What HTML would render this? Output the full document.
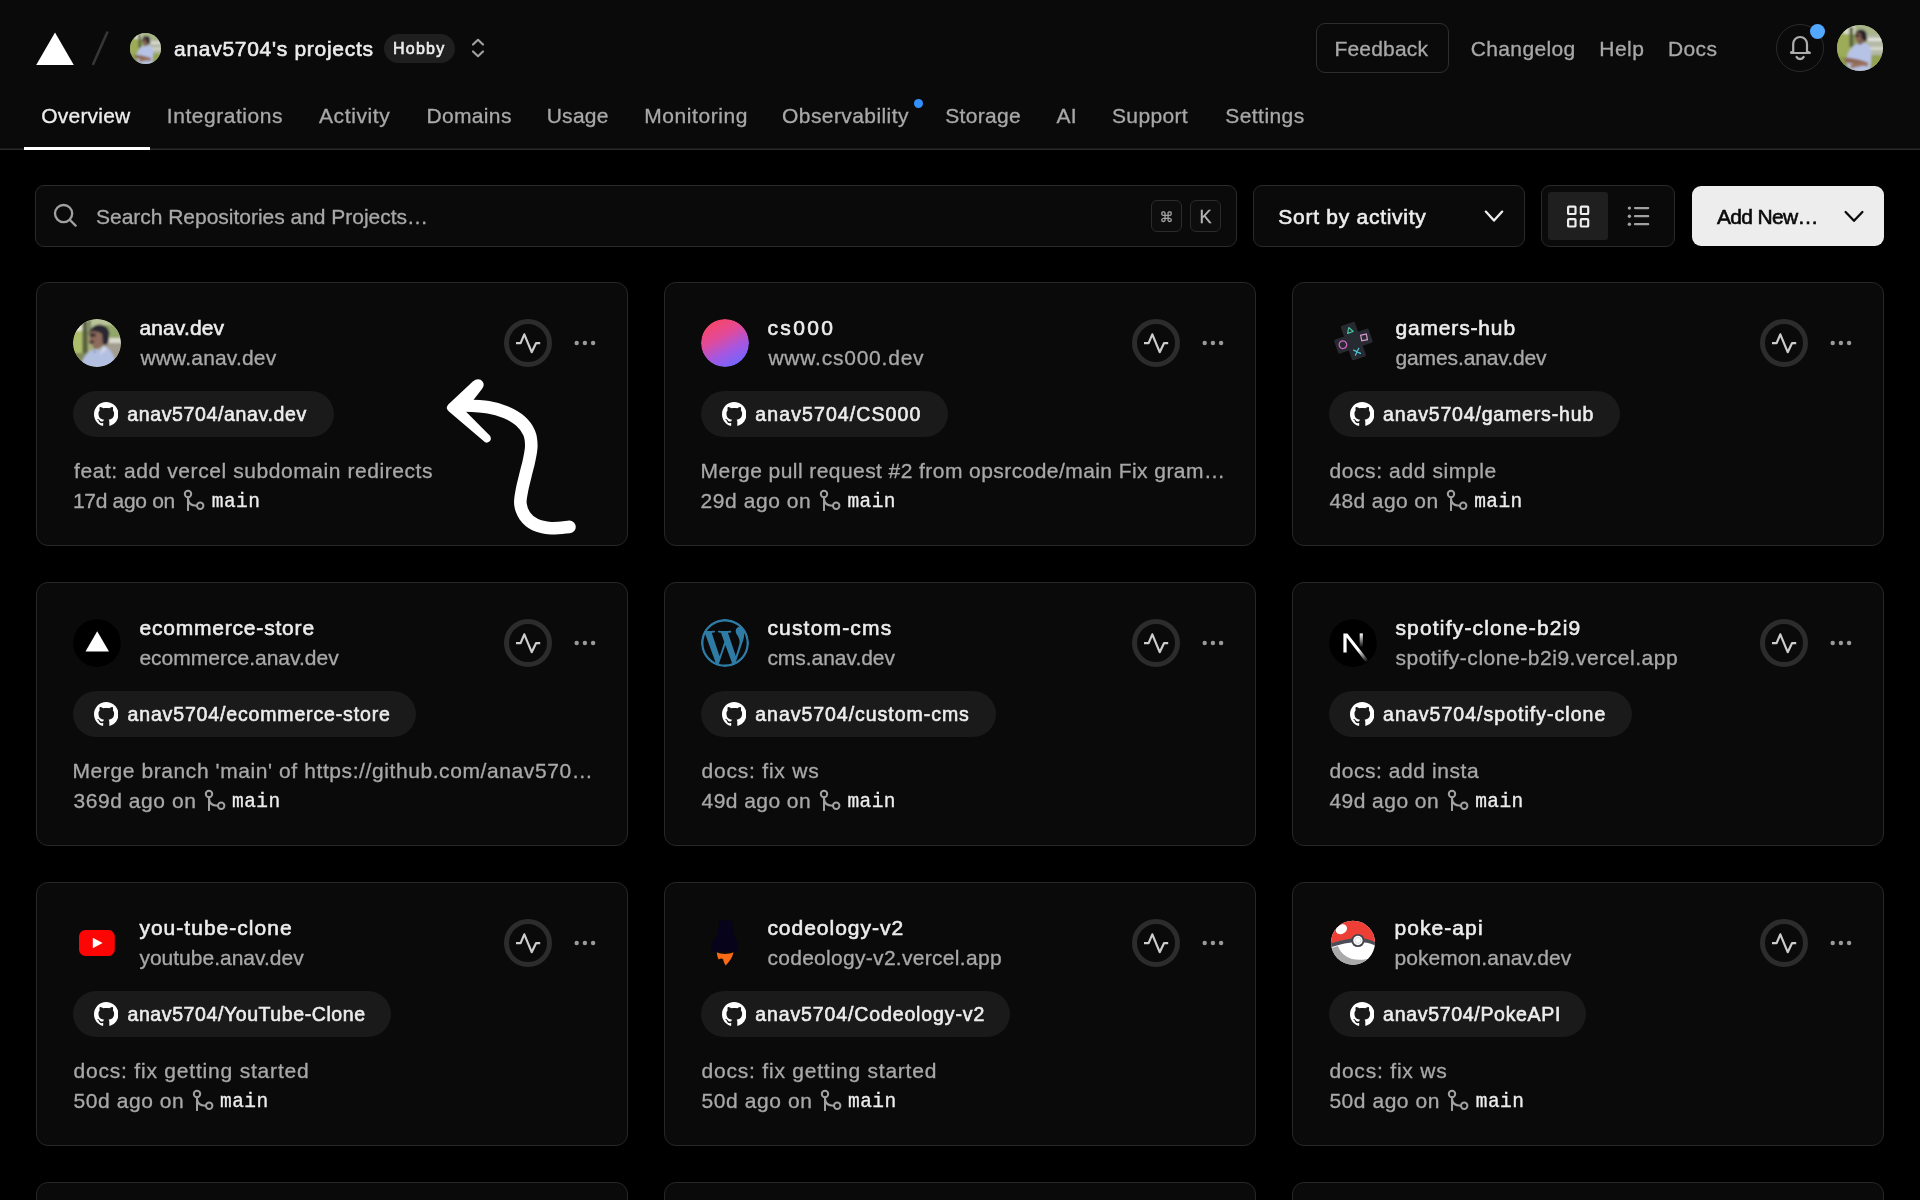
<!DOCTYPE html>
<html lang="en">
<head>
<meta charset="utf-8">
<title>Overview – Vercel</title>
<style>
*{box-sizing:border-box;margin:0;padding:0}
html,body{width:1920px;height:1200px;overflow:hidden;background:#000;color:#ededed;font-family:"Liberation Sans",sans-serif}
.abs{position:absolute}
#hdr{position:absolute;left:0;top:0;width:1920px;height:150px;background:#0a0a0a;border-bottom:1px solid #2a2a2a;box-shadow:inset 0 -1px 0 #181818}
.t{position:absolute;white-space:nowrap;line-height:30px;font-size:21px}
#ul{position:absolute;left:24px;top:147px;width:126px;height:3px;background:#fff}
.card{position:absolute;width:592px;height:264px;border:1px solid #272727;border-radius:12px;background:#0a0a0a}
.av{width:48px;height:48px;border-radius:50%;overflow:hidden}
.av svg{display:block}
.ring{width:48px;height:48px;border-radius:50%;border:5px solid #2c2c2c}
.pill{height:46px;border-radius:23px;background:#1a1a1a}
.box{border:1px solid #2a2a2a;border-radius:9px;background:#0a0a0a}
.kbd{width:31px;height:32px;padding-top:1px;border:1px solid #2a2a2a;border-radius:6px;background:#0d0d0d;color:#a1a1a1;font-size:17px;line-height:30px;text-align:center}
.avatar{border-radius:50%;background:radial-gradient(circle at 60% 75%,#b9c4e0 0 28%,transparent 30%),radial-gradient(circle at 58% 32%,#2a2623 0 14%,transparent 16%),linear-gradient(135deg,#9fb35a,#6f8a3c 50%,#a8a89a)}
#root{position:absolute;left:0;top:0;width:1920px;height:1200px;will-change:transform}
</style>
</head>
<body>
<div id="root">
<div id="hdr">
<svg class="abs" style="left:36px;top:32px" width="38" height="33" viewBox="0 0 38 33"><path d="M19 0.5 L37.8 33 L0.2 33 Z" fill="#fff"/></svg>
<svg class="abs" style="left:88px;top:28px" width="24" height="40" viewBox="0 0 24 40"><path d="M5.2 36 L19.2 4.5" stroke="#363636" stroke-width="2.6" stroke-linecap="round" fill="none"/></svg>
<div class="abs" style="left:130px;top:33px;width:31px;height:31px"><svg width="31" height="31" viewBox="0 0 46 46"><defs><filter id="bha" x="-20%" y="-20%" width="140%" height="140%"><feGaussianBlur stdDeviation="1.25"/></filter><clipPath id="cha"><circle cx="23" cy="23" r="23"/></clipPath></defs><g clip-path="url(#cha)"><rect width="46" height="46" fill="#8f9d5e"/><g filter="url(#bha)"><rect x="-2" y="8" width="16" height="26" fill="#9dac59"/><rect x="6" y="-2" width="12" height="11" fill="#d6dcc8"/><rect x="18" y="-2" width="30" height="12" fill="#a9b58a"/><rect x="29" y="10" width="19" height="22" fill="#b4b9a8"/><rect x="31" y="13" width="16" height="3" fill="#e3e5dc"/><rect x="33" y="22" width="14" height="3" fill="#d6d9cc"/><rect x="30" y="30" width="18" height="18" fill="#93a253"/><rect x="-2" y="32" width="14" height="16" fill="#8b9a4e"/><rect x="12.5" y="2" width="3.6" height="20" fill="#5a6140"/><ellipse cx="24" cy="9.6" rx="5.6" ry="5" fill="#27232b"/><ellipse cx="27.5" cy="13" rx="2.4" ry="3.6" fill="#27232b"/><ellipse cx="21.3" cy="12" rx="3" ry="4.2" fill="#8b6653"/><rect x="18.4" y="9.6" width="4.4" height="2" fill="#2d2526"/><rect x="21" y="14" width="5.5" height="6" fill="#80604f"/><path d="M9 36 C10 28 14 22 20 18.5 L23 20 L27 17.5 C32 19 34.5 23 34.5 29 L33 47 L13 47 Z" fill="#b7c3e6"/><path d="M7.5 33 C12 32 24 35 31 37.5 L30.5 41.5 C24 40 14 38.5 8.5 37.5 Z" fill="#8c6650"/><path d="M13 40 C18 38 26 36.5 31 37 L31 40.5 C26 40.5 19 42 14 43.5 Z" fill="#9a735c"/></g></g></svg></div>
<div class="abs" style="left:384px;top:34px;width:71px;height:29px;border-radius:15px;background:#1f1f1f"></div>
<svg class="abs" style="left:466px;top:36px" width="24" height="24" viewBox="0 0 24 24" fill="none" stroke="#a1a1a1" stroke-width="2.2" stroke-linecap="round" stroke-linejoin="round"><path d="M7 8.5 L12 3.8 L17 8.5"/><path d="M7 15.5 L12 20.2 L17 15.5"/></svg>
<div class="abs" id="fb" style="left:1316px;top:23px;width:133px;height:50px;border:1px solid #2e2e2e;border-radius:9px"></div>
<div class="abs" style="left:1776px;top:24px;width:48px;height:48px;border-radius:50%;border:1px solid #2a2a2a"></div>
<svg class="abs" style="left:1788px;top:34px" width="24" height="28" viewBox="0 0 24 28" fill="none" stroke="#adadad" stroke-width="2.2" stroke-linejoin="round"><path d="M5.2 19 V10 C5.2 6 8.2 3 12.1 3 C16 3 19 6 19 10 V19 M2.3 19 H21.9 L19 17.2 M5.2 17.2 L2.3 19"/><path d="M8.6 23 C9.8 25.6 14.4 25.6 15.6 23" stroke-width="2.4" stroke-linecap="round"/></svg>
<div class="abs" style="left:1809.5px;top:23.5px;width:15px;height:15px;border-radius:50%;background:#52a8ff"></div>
<div class="abs" style="left:1837.2px;top:25px;width:46px;height:46px"><svg width="46" height="46" viewBox="0 0 46 46"><defs><filter id="bhb" x="-20%" y="-20%" width="140%" height="140%"><feGaussianBlur stdDeviation="0.8"/></filter><clipPath id="chb"><circle cx="23" cy="23" r="23"/></clipPath></defs><g clip-path="url(#chb)"><rect width="46" height="46" fill="#8f9d5e"/><g filter="url(#bhb)"><rect x="-2" y="8" width="16" height="26" fill="#9dac59"/><rect x="6" y="-2" width="12" height="11" fill="#d6dcc8"/><rect x="18" y="-2" width="30" height="12" fill="#a9b58a"/><rect x="29" y="10" width="19" height="22" fill="#b4b9a8"/><rect x="31" y="13" width="16" height="3" fill="#e3e5dc"/><rect x="33" y="22" width="14" height="3" fill="#d6d9cc"/><rect x="30" y="30" width="18" height="18" fill="#93a253"/><rect x="-2" y="32" width="14" height="16" fill="#8b9a4e"/><rect x="12.5" y="2" width="3.6" height="20" fill="#5a6140"/><ellipse cx="24" cy="9.6" rx="5.6" ry="5" fill="#27232b"/><ellipse cx="27.5" cy="13" rx="2.4" ry="3.6" fill="#27232b"/><ellipse cx="21.3" cy="12" rx="3" ry="4.2" fill="#8b6653"/><rect x="18.4" y="9.6" width="4.4" height="2" fill="#2d2526"/><rect x="21" y="14" width="5.5" height="6" fill="#80604f"/><path d="M9 36 C10 28 14 22 20 18.5 L23 20 L27 17.5 C32 19 34.5 23 34.5 29 L33 47 L13 47 Z" fill="#b7c3e6"/><path d="M7.5 33 C12 32 24 35 31 37.5 L30.5 41.5 C24 40 14 38.5 8.5 37.5 Z" fill="#8c6650"/><path d="M13 40 C18 38 26 36.5 31 37 L31 40.5 C26 40.5 19 42 14 43.5 Z" fill="#9a735c"/></g></g></svg></div>
<div class="abs" style="left:914.3px;top:99px;width:9px;height:9px;border-radius:50%;background:#3291ff"></div>
<div id="ul"></div>
</div>
<div id="tools">
<div class="abs box" style="left:35px;top:185px;width:1202px;height:62px"></div>
<svg class="abs" style="left:52px;top:202px" width="26" height="26" viewBox="0 0 26 26" fill="none" stroke="#a1a1a1" stroke-width="2.3" stroke-linecap="round"><circle cx="11.6" cy="11.6" r="8.6"/><path d="M18 18 L23.6 23.6"/></svg>
<div class="abs kbd" style="left:1151px;top:200px;font-family:'DejaVu Sans',sans-serif;font-size:14px;line-height:31px;-webkit-text-stroke:.3px #a1a1a1">⌘</div>
<div class="abs kbd" style="left:1190px;top:200px;font-size:18px;line-height:31px;color:#b4b4b4;-webkit-text-stroke:.35px #b4b4b4">K</div>
<div class="abs box" style="left:1253px;top:185px;width:272px;height:62px"></div>
<svg class="abs" style="left:1482px;top:204px" width="24" height="24" viewBox="0 0 24 24" fill="none" stroke="#ededed" stroke-width="2.3" stroke-linecap="round" stroke-linejoin="round"><path d="M3.8 7.6 L12 16.6 L20.2 7.6"/></svg>
<div class="abs box" style="left:1541px;top:185px;width:134px;height:62px"></div>
<div class="abs" style="left:1548px;top:192px;width:60px;height:48px;background:#1f1f1f;border-radius:3px"></div>
<svg class="abs" style="left:1566px;top:204px" width="24" height="24" viewBox="0 0 24 24" fill="none" stroke="#ededed" stroke-width="2.2"><rect x="2.1" y="2.6" width="7.4" height="7.4" rx=".8"/><rect x="14.8" y="2.6" width="7.4" height="7.4" rx=".8"/><rect x="2.1" y="15.1" width="7.4" height="7.4" rx=".8"/><rect x="14.8" y="15.1" width="7.4" height="7.4" rx=".8"/></svg>
<svg class="abs" style="left:1626px;top:204px" width="24" height="24" viewBox="0 0 24 24" fill="none" stroke="#a1a1a1" stroke-width="2.2" stroke-linecap="round"><path d="M9 4.1 H22.2 M9 12.2 H22.2 M9 20.2 H22.2"/><g fill="#a1a1a1" stroke="none"><circle cx="3.4" cy="4.1" r="1.7"/><circle cx="3.4" cy="12.2" r="1.7"/><circle cx="3.4" cy="20.2" r="1.7"/></g></svg>
<div class="abs" style="left:1692px;top:186px;width:192px;height:60px;border-radius:9px;background:#ededed"></div>
<svg class="abs" style="left:1842px;top:204px" width="24" height="24" viewBox="0 0 24 24" fill="none" stroke="#0a0a0a" stroke-width="2.3" stroke-linecap="round" stroke-linejoin="round"><path d="M3.6 8 L12 16.8 L20.4 8"/></svg>
</div>

<div class="t" style="left:174.00px;top:34px;font-size:21px;letter-spacing:0.715px;color:#ededed;-webkit-text-stroke:0.6px #ededed;">anav5704's projects</div>
<div class="t" style="left:393.10px;top:34px;font-size:16px;letter-spacing:1.212px;color:#ededed;-webkit-text-stroke:0.6px #ededed;">Hobby</div>
<div class="t" style="left:1334.50px;top:34px;font-size:21px;letter-spacing:0.182px;color:#a8a8a8;-webkit-text-stroke:0.32px #a8a8a8;">Feedback</div>
<div class="t" style="left:1470.80px;top:34px;font-size:21px;letter-spacing:0.349px;color:#a8a8a8;-webkit-text-stroke:0.32px #a8a8a8;">Changelog</div>
<div class="t" style="left:1599.30px;top:34px;font-size:21px;letter-spacing:0.463px;color:#a8a8a8;-webkit-text-stroke:0.32px #a8a8a8;">Help</div>
<div class="t" style="left:1668.00px;top:34px;font-size:21px;letter-spacing:0.385px;color:#a8a8a8;-webkit-text-stroke:0.32px #a8a8a8;">Docs</div>
<div class="t" style="left:41.30px;top:101px;font-size:21px;letter-spacing:0.193px;color:#ededed;-webkit-text-stroke:0.32px #ededed;">Overview</div>
<div class="t" style="left:166.80px;top:101px;font-size:21px;letter-spacing:0.542px;color:#a8a8a8;-webkit-text-stroke:0.32px #a8a8a8;">Integrations</div>
<div class="t" style="left:319.00px;top:101px;font-size:21px;letter-spacing:0.599px;color:#a8a8a8;-webkit-text-stroke:0.32px #a8a8a8;">Activity</div>
<div class="t" style="left:426.40px;top:101px;font-size:21px;letter-spacing:0.356px;color:#a8a8a8;-webkit-text-stroke:0.32px #a8a8a8;">Domains</div>
<div class="t" style="left:546.70px;top:101px;font-size:21px;letter-spacing:0.269px;color:#a8a8a8;-webkit-text-stroke:0.32px #a8a8a8;">Usage</div>
<div class="t" style="left:644.30px;top:101px;font-size:21px;letter-spacing:0.559px;color:#a8a8a8;-webkit-text-stroke:0.32px #a8a8a8;">Monitoring</div>
<div class="t" style="left:782.10px;top:101px;font-size:21px;letter-spacing:0.410px;color:#a8a8a8;-webkit-text-stroke:0.32px #a8a8a8;">Observability</div>
<div class="t" style="left:945.30px;top:101px;font-size:21px;letter-spacing:0.305px;color:#a8a8a8;-webkit-text-stroke:0.32px #a8a8a8;">Storage</div>
<div class="t" style="left:1056.50px;top:101px;font-size:21px;letter-spacing:0.293px;color:#a8a8a8;-webkit-text-stroke:0.32px #a8a8a8;">AI</div>
<div class="t" style="left:1112.00px;top:101px;font-size:21px;letter-spacing:0.347px;color:#a8a8a8;-webkit-text-stroke:0.32px #a8a8a8;">Support</div>
<div class="t" style="left:1225.30px;top:101px;font-size:21px;letter-spacing:0.432px;color:#a8a8a8;-webkit-text-stroke:0.32px #a8a8a8;">Settings</div>
<div class="t" style="left:96.00px;top:201.6px;font-size:21px;letter-spacing:-0.021px;color:#a8a8a8;-webkit-text-stroke:0.32px #a8a8a8;">Search Repositories and Projects…</div>
<div class="t" style="left:1278.30px;top:201.6px;font-size:21px;letter-spacing:0.731px;color:#ededed;-webkit-text-stroke:0.6px #ededed;">Sort by activity</div>
<div class="t" style="left:1716.90px;top:201.6px;font-size:21px;letter-spacing:-0.673px;color:#0a0a0a;-webkit-text-stroke:0.6px #0a0a0a;">Add New…</div>
<div class="card" style="left:36px;top:282px"></div>
<div class="abs av" style="left:73px;top:319px"><svg width="48" height="48" viewBox="0 0 48 48"><defs><filter id="bl1" x="-20%" y="-20%" width="140%" height="140%"><feGaussianBlur stdDeviation="0.85"/></filter><clipPath id="cp1"><circle cx="24" cy="24" r="24"/></clipPath></defs><g clip-path="url(#cp1)"><rect width="48" height="48" fill="#a3ad7a"/><g filter="url(#bl1)"><rect x="-2" y="10" width="14" height="30" fill="#adbd6a"/><rect x="0" y="-2" width="20" height="14" fill="#dfe3cf"/><rect x="18" y="-2" width="32" height="16" fill="#b9c49a"/><rect x="30" y="6" width="20" height="14" fill="#93a66a"/><rect x="28" y="19" width="22" height="26" fill="#a39d8f"/><rect x="33" y="19" width="16" height="5" fill="#d9d9cc"/><rect x="9.5" y="2" width="5" height="34" fill="#56603c"/><rect x="15" y="0" width="3" height="16" fill="#7d8760"/><rect x="0" y="34" width="14" height="16" fill="#7f8a58"/><ellipse cx="26.5" cy="14.5" rx="10" ry="9" fill="#2a2630"/><ellipse cx="32" cy="20" rx="4" ry="6" fill="#2a2630"/><path d="M16.5 14 C18 11 26 12 29 15 L30 27 L22 31 L19 25 L16 24 Z" fill="#8c6b5c"/><path d="M17 14.5 L23 14.5 L22 18 L17.5 18 Z" fill="#3a2c2c"/><path d="M16 23 C18 25.5 20.5 25 21 22.5 L20 21 Z" fill="#3b2e2b"/><path d="M7 50 C9 38 15 32 22 30 L26 31 L31 27 C38 30 41 36 42.5 44 L43 50 Z" fill="#b4c0e2"/><path d="M21 30 L22.5 34 L21.3 34 Z" fill="#4a5878"/><path d="M30 27 L27 36 L34 30 Z" fill="#d5d6ea"/></g></g></svg></div>
<div class="t" style="left:139.40px;top:313px;font-size:21px;letter-spacing:0.147px;color:#ededed;-webkit-text-stroke:0.6px #ededed;">anav.dev</div>
<div class="t" style="left:140.40px;top:343px;font-size:21px;letter-spacing:0.178px;color:#a8a8a8;-webkit-text-stroke:0.32px #a8a8a8;">www.anav.dev</div>
<div class="abs ring" style="left:504px;top:319px"></div>
<svg class="abs" style="left:516px;top:331px" width="25" height="24" viewBox="0 0 25 24" fill="none" stroke="#cdcdcd" stroke-width="2.2" stroke-linejoin="round"><path d="M0 12.2 H4.6 L8.3 3.3 L15.7 21.2 L20 12.2 H24.2"/></svg>
<svg class="abs" style="left:573px;top:340px" width="24" height="6" viewBox="0 0 24 6" fill="#9a9a9a"><circle cx="3.7" cy="3" r="2.2"/><circle cx="11.9" cy="3" r="2.2"/><circle cx="20.1" cy="3" r="2.2"/></svg>
<div class="abs pill" style="left:73px;top:391px;width:261.0px"></div>
<svg class="abs" style="left:93.5px;top:401.8px" width="24.5" height="24.5" viewBox="0 0 16 16" fill="#fff"><path d="M8 0C3.58 0 0 3.58 0 8c0 3.54 2.29 6.53 5.47 7.59.4.07.55-.17.55-.38 0-.19-.01-.82-.01-1.49-2.01.37-2.53-.49-2.69-.94-.09-.23-.48-.94-.82-1.13-.28-.15-.68-.52-.01-.53.63-.01 1.08.58 1.23.82.72 1.21 1.87.87 2.33.66.07-.52.28-.87.51-1.07-1.78-.2-3.64-.89-3.64-3.95 0-.87.31-1.59.82-2.15-.08-.2-.36-1.02.08-2.12 0 0 .67-.21 2.2.82.64-.18 1.32-.27 2-.27.68 0 1.36.09 2 .27 1.53-1.04 2.2-.82 2.2-.82.44 1.1.16 1.92.08 2.12.51.56.82 1.27.82 2.15 0 3.07-1.87 3.75-3.65 3.95.29.25.54.73.54 1.48 0 1.07-.01 1.93-.01 2.2 0 .21.15.46.55.38A8.013 8.013 0 0016 8c0-4.42-3.58-8-8-8z"/></svg>
<div class="t" style="left:127.20px;top:398.5px;font-size:19.5px;letter-spacing:0.642px;color:#ededed;-webkit-text-stroke:0.6px #ededed;">anav5704/anav.dev</div>
<div class="t" style="left:74.00px;top:455.5px;font-size:21px;letter-spacing:0.571px;color:#a8a8a8;-webkit-text-stroke:0.32px #a8a8a8;">feat: add vercel subdomain redirects</div>
<div class="t" style="left:73.00px;top:486px;font-size:21px;letter-spacing:-0.325px;color:#a8a8a8;-webkit-text-stroke:0.32px #a8a8a8;">17d ago on</div>
<svg class="abs" style="left:183.1px;top:489.3px" width="22" height="22" viewBox="0 0 22 22" fill="none" stroke="#a1a1a1" stroke-width="2" stroke-linecap="round"><circle cx="5" cy="5" r="3.2"/><circle cx="17.2" cy="16.8" r="3.2"/><path d="M5 8.3 V21.2 M5 9 C5 14 8 16.8 13.9 16.8"/></svg>
<div class="t" style="left:211.80px;top:486.5px;font-size:19.5px;letter-spacing:0.431px;color:#ededed;font-family:'Liberation Mono',monospace;-webkit-text-stroke:0.32px #ededed;">main</div>
<div class="card" style="left:664px;top:282px"></div>
<div class="abs av" style="left:701px;top:319px"><div style="width:48px;height:48px;border-radius:50%;background:linear-gradient(152deg,#f6466a 12%,#e24a98 38%,#a856de 62%,#7765fb 86%)"></div></div>
<div class="t" style="left:767.40px;top:313px;font-size:21px;letter-spacing:2.385px;color:#ededed;-webkit-text-stroke:0.6px #ededed;">cs000</div>
<div class="t" style="left:768.40px;top:343px;font-size:21px;letter-spacing:0.775px;color:#a8a8a8;-webkit-text-stroke:0.32px #a8a8a8;">www.cs000.dev</div>
<div class="abs ring" style="left:1132px;top:319px"></div>
<svg class="abs" style="left:1144px;top:331px" width="25" height="24" viewBox="0 0 25 24" fill="none" stroke="#cdcdcd" stroke-width="2.2" stroke-linejoin="round"><path d="M0 12.2 H4.6 L8.3 3.3 L15.7 21.2 L20 12.2 H24.2"/></svg>
<svg class="abs" style="left:1201px;top:340px" width="24" height="6" viewBox="0 0 24 6" fill="#9a9a9a"><circle cx="3.7" cy="3" r="2.2"/><circle cx="11.9" cy="3" r="2.2"/><circle cx="20.1" cy="3" r="2.2"/></svg>
<div class="abs pill" style="left:701px;top:391px;width:247.0px"></div>
<svg class="abs" style="left:721.5px;top:401.8px" width="24.5" height="24.5" viewBox="0 0 16 16" fill="#fff"><path d="M8 0C3.58 0 0 3.58 0 8c0 3.54 2.29 6.53 5.47 7.59.4.07.55-.17.55-.38 0-.19-.01-.82-.01-1.49-2.01.37-2.53-.49-2.69-.94-.09-.23-.48-.94-.82-1.13-.28-.15-.68-.52-.01-.53.63-.01 1.08.58 1.23.82.72 1.21 1.87.87 2.33.66.07-.52.28-.87.51-1.07-1.78-.2-3.64-.89-3.64-3.95 0-.87.31-1.59.82-2.15-.08-.2-.36-1.02.08-2.12 0 0 .67-.21 2.2.82.64-.18 1.32-.27 2-.27.68 0 1.36.09 2 .27 1.53-1.04 2.2-.82 2.2-.82.44 1.1.16 1.92.08 2.12.51.56.82 1.27.82 2.15 0 3.07-1.87 3.75-3.65 3.95.29.25.54.73.54 1.48 0 1.07-.01 1.93-.01 2.2 0 .21.15.46.55.38A8.013 8.013 0 0016 8c0-4.42-3.58-8-8-8z"/></svg>
<div class="t" style="left:755.30px;top:398.5px;font-size:19.5px;letter-spacing:1.103px;color:#ededed;-webkit-text-stroke:0.6px #ededed;">anav5704/CS000</div>
<div class="t" style="left:700.60px;top:455.5px;font-size:21px;letter-spacing:0.434px;color:#a8a8a8;-webkit-text-stroke:0.32px #a8a8a8;">Merge pull request #2 from opsrcode/main Fix gram…</div>
<div class="t" style="left:700.60px;top:486px;font-size:21px;letter-spacing:0.553px;color:#a8a8a8;-webkit-text-stroke:0.32px #a8a8a8;">29d ago on</div>
<svg class="abs" style="left:818.6px;top:489.3px" width="22" height="22" viewBox="0 0 22 22" fill="none" stroke="#a1a1a1" stroke-width="2" stroke-linecap="round"><circle cx="5" cy="5" r="3.2"/><circle cx="17.2" cy="16.8" r="3.2"/><path d="M5 8.3 V21.2 M5 9 C5 14 8 16.8 13.9 16.8"/></svg>
<div class="t" style="left:847.40px;top:486.5px;font-size:19.5px;letter-spacing:0.431px;color:#ededed;font-family:'Liberation Mono',monospace;-webkit-text-stroke:0.32px #ededed;">main</div>
<div class="card" style="left:1292px;top:282px"></div>
<div class="abs av" style="left:1329px;top:319px"><svg width="48" height="48" viewBox="0 0 48 48"><g transform="translate(24.4 22.1) rotate(-19) scale(.9)"><path d="M-6.5 -18.5 h13 v12 h12 v13 h-12 v12 h-13 v-12 h-12 v-13 h12z" fill="#272a31" stroke="#272a31" stroke-width="3.5" stroke-linejoin="round"/><path d="M0 -16 L3.3 -10.2 L-3.3 -10.2 Z" fill="none" stroke="#48c49c" stroke-width="1.3" stroke-linejoin="round"/><circle cx="-12.3" cy="0" r="4.2" fill="none" stroke="#d267c3" stroke-width="1.4"/><rect x="9.3" y="-3.2" width="6.4" height="6.4" fill="none" stroke="#d498cb" stroke-width="1.4" transform="rotate(8 12.5 0)"/><path d="M-3 9.5 L3 15.5 M3 9.5 L-3 15.5" stroke="#4cc3d3" stroke-width="1.4" stroke-linecap="round"/></g></svg></div>
<div class="t" style="left:1395.40px;top:313px;font-size:21px;letter-spacing:0.847px;color:#ededed;-webkit-text-stroke:0.6px #ededed;">gamers-hub</div>
<div class="t" style="left:1395.40px;top:343px;font-size:21px;letter-spacing:-0.103px;color:#a8a8a8;-webkit-text-stroke:0.32px #a8a8a8;">games.anav.dev</div>
<div class="abs ring" style="left:1760px;top:319px"></div>
<svg class="abs" style="left:1772px;top:331px" width="25" height="24" viewBox="0 0 25 24" fill="none" stroke="#cdcdcd" stroke-width="2.2" stroke-linejoin="round"><path d="M0 12.2 H4.6 L8.3 3.3 L15.7 21.2 L20 12.2 H24.2"/></svg>
<svg class="abs" style="left:1829px;top:340px" width="24" height="6" viewBox="0 0 24 6" fill="#9a9a9a"><circle cx="3.7" cy="3" r="2.2"/><circle cx="11.9" cy="3" r="2.2"/><circle cx="20.1" cy="3" r="2.2"/></svg>
<div class="abs pill" style="left:1329px;top:391px;width:291.4px"></div>
<svg class="abs" style="left:1349.5px;top:401.8px" width="24.5" height="24.5" viewBox="0 0 16 16" fill="#fff"><path d="M8 0C3.58 0 0 3.58 0 8c0 3.54 2.29 6.53 5.47 7.59.4.07.55-.17.55-.38 0-.19-.01-.82-.01-1.49-2.01.37-2.53-.49-2.69-.94-.09-.23-.48-.94-.82-1.13-.28-.15-.68-.52-.01-.53.63-.01 1.08.58 1.23.82.72 1.21 1.87.87 2.33.66.07-.52.28-.87.51-1.07-1.78-.2-3.64-.89-3.64-3.95 0-.87.31-1.59.82-2.15-.08-.2-.36-1.02.08-2.12 0 0 .67-.21 2.2.82.64-.18 1.32-.27 2-.27.68 0 1.36.09 2 .27 1.53-1.04 2.2-.82 2.2-.82.44 1.1.16 1.92.08 2.12.51.56.82 1.27.82 2.15 0 3.07-1.87 3.75-3.65 3.95.29.25.54.73.54 1.48 0 1.07-.01 1.93-.01 2.2 0 .21.15.46.55.38A8.013 8.013 0 0016 8c0-4.42-3.58-8-8-8z"/></svg>
<div class="t" style="left:1383.10px;top:398.5px;font-size:19.5px;letter-spacing:0.834px;color:#ededed;-webkit-text-stroke:0.6px #ededed;">anav5704/gamers-hub</div>
<div class="t" style="left:1329.40px;top:455.5px;font-size:21px;letter-spacing:0.613px;color:#a8a8a8;-webkit-text-stroke:0.32px #a8a8a8;">docs: add simple</div>
<div class="t" style="left:1329.40px;top:486px;font-size:21px;letter-spacing:0.397px;color:#a8a8a8;-webkit-text-stroke:0.32px #a8a8a8;">48d ago on</div>
<svg class="abs" style="left:1446.0px;top:489.3px" width="22" height="22" viewBox="0 0 22 22" fill="none" stroke="#a1a1a1" stroke-width="2" stroke-linecap="round"><circle cx="5" cy="5" r="3.2"/><circle cx="17.2" cy="16.8" r="3.2"/><path d="M5 8.3 V21.2 M5 9 C5 14 8 16.8 13.9 16.8"/></svg>
<div class="t" style="left:1474.20px;top:486.5px;font-size:19.5px;letter-spacing:0.431px;color:#ededed;font-family:'Liberation Mono',monospace;-webkit-text-stroke:0.32px #ededed;">main</div>
<div class="card" style="left:36px;top:582px"></div>
<div class="abs av" style="left:73px;top:619px"><svg width="48" height="48" viewBox="0 0 48 48"><circle cx="24" cy="24" r="24" fill="#000"/><path d="M24.2 12.2 L36 32.5 L12.5 32.5 Z" fill="#fff"/></svg></div>
<div class="t" style="left:139.40px;top:613px;font-size:21px;letter-spacing:0.807px;color:#ededed;-webkit-text-stroke:0.6px #ededed;">ecommerce-store</div>
<div class="t" style="left:139.40px;top:643px;font-size:21px;letter-spacing:0.006px;color:#a8a8a8;-webkit-text-stroke:0.32px #a8a8a8;">ecommerce.anav.dev</div>
<div class="abs ring" style="left:504px;top:619px"></div>
<svg class="abs" style="left:516px;top:631px" width="25" height="24" viewBox="0 0 25 24" fill="none" stroke="#cdcdcd" stroke-width="2.2" stroke-linejoin="round"><path d="M0 12.2 H4.6 L8.3 3.3 L15.7 21.2 L20 12.2 H24.2"/></svg>
<svg class="abs" style="left:573px;top:640px" width="24" height="6" viewBox="0 0 24 6" fill="#9a9a9a"><circle cx="3.7" cy="3" r="2.2"/><circle cx="11.9" cy="3" r="2.2"/><circle cx="20.1" cy="3" r="2.2"/></svg>
<div class="abs pill" style="left:73px;top:691px;width:343.0px"></div>
<svg class="abs" style="left:93.5px;top:701.8px" width="24.5" height="24.5" viewBox="0 0 16 16" fill="#fff"><path d="M8 0C3.58 0 0 3.58 0 8c0 3.54 2.29 6.53 5.47 7.59.4.07.55-.17.55-.38 0-.19-.01-.82-.01-1.49-2.01.37-2.53-.49-2.69-.94-.09-.23-.48-.94-.82-1.13-.28-.15-.68-.52-.01-.53.63-.01 1.08.58 1.23.82.72 1.21 1.87.87 2.33.66.07-.52.28-.87.51-1.07-1.78-.2-3.64-.89-3.64-3.95 0-.87.31-1.59.82-2.15-.08-.2-.36-1.02.08-2.12 0 0 .67-.21 2.2.82.64-.18 1.32-.27 2-.27.68 0 1.36.09 2 .27 1.53-1.04 2.2-.82 2.2-.82.44 1.1.16 1.92.08 2.12.51.56.82 1.27.82 2.15 0 3.07-1.87 3.75-3.65 3.95.29.25.54.73.54 1.48 0 1.07-.01 1.93-.01 2.2 0 .21.15.46.55.38A8.013 8.013 0 0016 8c0-4.42-3.58-8-8-8z"/></svg>
<div class="t" style="left:127.50px;top:698.5px;font-size:19.5px;letter-spacing:0.850px;color:#ededed;-webkit-text-stroke:0.6px #ededed;">anav5704/ecommerce-store</div>
<div class="t" style="left:72.50px;top:755.5px;font-size:21px;letter-spacing:0.590px;color:#a8a8a8;-webkit-text-stroke:0.32px #a8a8a8;">Merge branch 'main' of https://github.com/anav570…</div>
<div class="t" style="left:73.50px;top:786px;font-size:21px;letter-spacing:0.560px;color:#a8a8a8;-webkit-text-stroke:0.32px #a8a8a8;">369d ago on</div>
<svg class="abs" style="left:203.8px;top:789.3px" width="22" height="22" viewBox="0 0 22 22" fill="none" stroke="#a1a1a1" stroke-width="2" stroke-linecap="round"><circle cx="5" cy="5" r="3.2"/><circle cx="17.2" cy="16.8" r="3.2"/><path d="M5 8.3 V21.2 M5 9 C5 14 8 16.8 13.9 16.8"/></svg>
<div class="t" style="left:232.00px;top:786.5px;font-size:19.5px;letter-spacing:0.431px;color:#ededed;font-family:'Liberation Mono',monospace;-webkit-text-stroke:0.32px #ededed;">main</div>
<div class="card" style="left:664px;top:582px"></div>
<div class="abs av" style="left:701px;top:619px"><svg width="48" height="48" viewBox="0 0 24 24"><path fill="#2e7ca6" d="M21.469 6.825c.84 1.537 1.318 3.3 1.318 5.175 0 3.979-2.156 7.456-5.363 9.325l3.295-9.527c.615-1.54.82-2.771.82-3.864 0-.405-.026-.78-.07-1.11m-7.981.105c.647-.03 1.232-.105 1.232-.105.582-.075.514-.93-.067-.899 0 0-1.755.135-2.88.135-1.064 0-2.85-.15-2.85-.15-.585-.03-.661.855-.075.885 0 0 .54.061 1.125.09l1.68 4.605-2.37 7.08L5.354 6.9c.649-.03 1.234-.1 1.234-.1.585-.075.516-.93-.065-.896 0 0-1.746.138-2.874.138-.2 0-.438-.008-.69-.015C4.911 3.15 8.235 1.215 12 1.215c2.809 0 5.365 1.072 7.286 2.833-.046-.003-.091-.009-.141-.009-1.06 0-1.812.923-1.812 1.914 0 .89.513 1.643 1.060 2.531.411.72.89 1.643.89 2.977 0 .915-.354 1.994-.821 3.479l-1.075 3.585-3.9-11.61.001.014zM12 22.784c-1.059 0-2.081-.153-3.048-.437l3.237-9.406 3.315 9.087c.024.053.05.101.078.149-1.12.393-2.325.609-3.582.609M1.211 12c0-1.564.336-3.05.935-4.39L7.29 21.709C3.694 19.96 1.212 16.271 1.211 12M12 0C5.385 0 0 5.385 0 12s5.385 12 12 12 12-5.385 12-12S18.615 0 12 0"/></svg></div>
<div class="t" style="left:767.40px;top:613px;font-size:21px;letter-spacing:1.181px;color:#ededed;-webkit-text-stroke:0.6px #ededed;">custom-cms</div>
<div class="t" style="left:767.40px;top:643px;font-size:21px;letter-spacing:-0.036px;color:#a8a8a8;-webkit-text-stroke:0.32px #a8a8a8;">cms.anav.dev</div>
<div class="abs ring" style="left:1132px;top:619px"></div>
<svg class="abs" style="left:1144px;top:631px" width="25" height="24" viewBox="0 0 25 24" fill="none" stroke="#cdcdcd" stroke-width="2.2" stroke-linejoin="round"><path d="M0 12.2 H4.6 L8.3 3.3 L15.7 21.2 L20 12.2 H24.2"/></svg>
<svg class="abs" style="left:1201px;top:640px" width="24" height="6" viewBox="0 0 24 6" fill="#9a9a9a"><circle cx="3.7" cy="3" r="2.2"/><circle cx="11.9" cy="3" r="2.2"/><circle cx="20.1" cy="3" r="2.2"/></svg>
<div class="abs pill" style="left:701px;top:691px;width:295.1px"></div>
<svg class="abs" style="left:721.5px;top:701.8px" width="24.5" height="24.5" viewBox="0 0 16 16" fill="#fff"><path d="M8 0C3.58 0 0 3.58 0 8c0 3.54 2.29 6.53 5.47 7.59.4.07.55-.17.55-.38 0-.19-.01-.82-.01-1.49-2.01.37-2.53-.49-2.69-.94-.09-.23-.48-.94-.82-1.13-.28-.15-.68-.52-.01-.53.63-.01 1.08.58 1.23.82.72 1.21 1.87.87 2.33.66.07-.52.28-.87.51-1.07-1.78-.2-3.64-.89-3.64-3.95 0-.87.31-1.59.82-2.15-.08-.2-.36-1.02.08-2.12 0 0 .67-.21 2.2.82.64-.18 1.32-.27 2-.27.68 0 1.36.09 2 .27 1.53-1.04 2.2-.82 2.2-.82.44 1.1.16 1.92.08 2.12.51.56.82 1.27.82 2.15 0 3.07-1.87 3.75-3.65 3.95.29.25.54.73.54 1.48 0 1.07-.01 1.93-.01 2.2 0 .21.15.46.55.38A8.013 8.013 0 0016 8c0-4.42-3.58-8-8-8z"/></svg>
<div class="t" style="left:755.30px;top:698.5px;font-size:19.5px;letter-spacing:0.965px;color:#ededed;-webkit-text-stroke:0.6px #ededed;">anav5704/custom-cms</div>
<div class="t" style="left:701.60px;top:755.5px;font-size:21px;letter-spacing:0.779px;color:#a8a8a8;-webkit-text-stroke:0.32px #a8a8a8;">docs: fix ws</div>
<div class="t" style="left:701.60px;top:786px;font-size:21px;letter-spacing:0.442px;color:#a8a8a8;-webkit-text-stroke:0.32px #a8a8a8;">49d ago on</div>
<svg class="abs" style="left:818.6px;top:789.3px" width="22" height="22" viewBox="0 0 22 22" fill="none" stroke="#a1a1a1" stroke-width="2" stroke-linecap="round"><circle cx="5" cy="5" r="3.2"/><circle cx="17.2" cy="16.8" r="3.2"/><path d="M5 8.3 V21.2 M5 9 C5 14 8 16.8 13.9 16.8"/></svg>
<div class="t" style="left:847.40px;top:786.5px;font-size:19.5px;letter-spacing:0.431px;color:#ededed;font-family:'Liberation Mono',monospace;-webkit-text-stroke:0.32px #ededed;">main</div>
<div class="card" style="left:1292px;top:582px"></div>
<div class="abs av" style="left:1329px;top:619px"><svg width="48" height="48" viewBox="0 0 180 180"><defs><linearGradient id="nxa" x1="109" y1="116.5" x2="144.5" y2="160.5" gradientUnits="userSpaceOnUse"><stop stop-color="#fff"/><stop offset="1" stop-color="#fff" stop-opacity="0"/></linearGradient><linearGradient id="nxb" x1="121" y1="54" x2="120.8" y2="106.9" gradientUnits="userSpaceOnUse"><stop stop-color="#fff"/><stop offset="1" stop-color="#fff" stop-opacity="0"/></linearGradient></defs><circle cx="90" cy="90" r="90" fill="#000"/><path d="M149.508 157.52L69.142 54H54V125.97H66.1136V69.3836L139.999 164.845C143.333 162.614 146.509 160.165 149.508 157.52Z" fill="url(#nxa)"/><rect x="115" y="54" width="12" height="72" fill="url(#nxb)"/></svg></div>
<div class="t" style="left:1395.40px;top:613px;font-size:21px;letter-spacing:1.188px;color:#ededed;-webkit-text-stroke:0.6px #ededed;">spotify-clone-b2i9</div>
<div class="t" style="left:1395.40px;top:643px;font-size:21px;letter-spacing:0.535px;color:#a8a8a8;-webkit-text-stroke:0.32px #a8a8a8;">spotify-clone-b2i9.vercel.app</div>
<div class="abs ring" style="left:1760px;top:619px"></div>
<svg class="abs" style="left:1772px;top:631px" width="25" height="24" viewBox="0 0 25 24" fill="none" stroke="#cdcdcd" stroke-width="2.2" stroke-linejoin="round"><path d="M0 12.2 H4.6 L8.3 3.3 L15.7 21.2 L20 12.2 H24.2"/></svg>
<svg class="abs" style="left:1829px;top:640px" width="24" height="6" viewBox="0 0 24 6" fill="#9a9a9a"><circle cx="3.7" cy="3" r="2.2"/><circle cx="11.9" cy="3" r="2.2"/><circle cx="20.1" cy="3" r="2.2"/></svg>
<div class="abs pill" style="left:1329px;top:691px;width:303.1px"></div>
<svg class="abs" style="left:1349.5px;top:701.8px" width="24.5" height="24.5" viewBox="0 0 16 16" fill="#fff"><path d="M8 0C3.58 0 0 3.58 0 8c0 3.54 2.29 6.53 5.47 7.59.4.07.55-.17.55-.38 0-.19-.01-.82-.01-1.49-2.01.37-2.53-.49-2.69-.94-.09-.23-.48-.94-.82-1.13-.28-.15-.68-.52-.01-.53.63-.01 1.08.58 1.23.82.72 1.21 1.87.87 2.33.66.07-.52.28-.87.51-1.07-1.78-.2-3.64-.89-3.64-3.95 0-.87.31-1.59.82-2.15-.08-.2-.36-1.02.08-2.12 0 0 .67-.21 2.2.82.64-.18 1.32-.27 2-.27.68 0 1.36.09 2 .27 1.53-1.04 2.2-.82 2.2-.82.44 1.1.16 1.92.08 2.12.51.56.82 1.27.82 2.15 0 3.07-1.87 3.75-3.65 3.95.29.25.54.73.54 1.48 0 1.07-.01 1.93-.01 2.2 0 .21.15.46.55.38A8.013 8.013 0 0016 8c0-4.42-3.58-8-8-8z"/></svg>
<div class="t" style="left:1383.10px;top:698.5px;font-size:19.5px;letter-spacing:1.033px;color:#ededed;-webkit-text-stroke:0.6px #ededed;">anav5704/spotify-clone</div>
<div class="t" style="left:1329.40px;top:755.5px;font-size:21px;letter-spacing:0.573px;color:#a8a8a8;-webkit-text-stroke:0.32px #a8a8a8;">docs: add insta</div>
<div class="t" style="left:1329.40px;top:786px;font-size:21px;letter-spacing:0.464px;color:#a8a8a8;-webkit-text-stroke:0.32px #a8a8a8;">49d ago on</div>
<svg class="abs" style="left:1446.6px;top:789.3px" width="22" height="22" viewBox="0 0 22 22" fill="none" stroke="#a1a1a1" stroke-width="2" stroke-linecap="round"><circle cx="5" cy="5" r="3.2"/><circle cx="17.2" cy="16.8" r="3.2"/><path d="M5 8.3 V21.2 M5 9 C5 14 8 16.8 13.9 16.8"/></svg>
<div class="t" style="left:1475.20px;top:786.5px;font-size:19.5px;letter-spacing:0.431px;color:#ededed;font-family:'Liberation Mono',monospace;-webkit-text-stroke:0.32px #ededed;">main</div>
<div class="card" style="left:36px;top:882px"></div>
<div class="abs av" style="left:73px;top:919px"><svg width="48" height="48" viewBox="0 0 48 48"><rect x="6" y="11.1" width="35.8" height="25.8" rx="6.4" fill="#fe0505"/><path d="M19.8 18.8 L29.6 24 L19.8 29.2 Z" fill="#fff"/></svg></div>
<div class="t" style="left:139.40px;top:913px;font-size:21px;letter-spacing:1.020px;color:#ededed;-webkit-text-stroke:0.6px #ededed;">you-tube-clone</div>
<div class="t" style="left:139.40px;top:943px;font-size:21px;letter-spacing:0.004px;color:#a8a8a8;-webkit-text-stroke:0.32px #a8a8a8;">youtube.anav.dev</div>
<div class="abs ring" style="left:504px;top:919px"></div>
<svg class="abs" style="left:516px;top:931px" width="25" height="24" viewBox="0 0 25 24" fill="none" stroke="#cdcdcd" stroke-width="2.2" stroke-linejoin="round"><path d="M0 12.2 H4.6 L8.3 3.3 L15.7 21.2 L20 12.2 H24.2"/></svg>
<svg class="abs" style="left:573px;top:940px" width="24" height="6" viewBox="0 0 24 6" fill="#9a9a9a"><circle cx="3.7" cy="3" r="2.2"/><circle cx="11.9" cy="3" r="2.2"/><circle cx="20.1" cy="3" r="2.2"/></svg>
<div class="abs pill" style="left:73px;top:991px;width:317.5px"></div>
<svg class="abs" style="left:93.5px;top:1001.8px" width="24.5" height="24.5" viewBox="0 0 16 16" fill="#fff"><path d="M8 0C3.58 0 0 3.58 0 8c0 3.54 2.29 6.53 5.47 7.59.4.07.55-.17.55-.38 0-.19-.01-.82-.01-1.49-2.01.37-2.53-.49-2.69-.94-.09-.23-.48-.94-.82-1.13-.28-.15-.68-.52-.01-.53.63-.01 1.08.58 1.23.82.72 1.21 1.87.87 2.33.66.07-.52.28-.87.51-1.07-1.78-.2-3.64-.89-3.64-3.95 0-.87.31-1.59.82-2.15-.08-.2-.36-1.02.08-2.12 0 0 .67-.21 2.2.82.64-.18 1.32-.27 2-.27.68 0 1.36.09 2 .27 1.53-1.04 2.2-.82 2.2-.82.44 1.1.16 1.92.08 2.12.51.56.82 1.27.82 2.15 0 3.07-1.87 3.75-3.65 3.95.29.25.54.73.54 1.48 0 1.07-.01 1.93-.01 2.2 0 .21.15.46.55.38A8.013 8.013 0 0016 8c0-4.42-3.58-8-8-8z"/></svg>
<div class="t" style="left:127.50px;top:998.5px;font-size:19.5px;letter-spacing:0.590px;color:#ededed;-webkit-text-stroke:0.6px #ededed;">anav5704/YouTube-Clone</div>
<div class="t" style="left:73.50px;top:1055.5px;font-size:21px;letter-spacing:0.801px;color:#a8a8a8;-webkit-text-stroke:0.32px #a8a8a8;">docs: fix getting started</div>
<div class="t" style="left:73.50px;top:1086px;font-size:21px;letter-spacing:0.575px;color:#a8a8a8;-webkit-text-stroke:0.32px #a8a8a8;">50d ago on</div>
<svg class="abs" style="left:191.7px;top:1089.3px" width="22" height="22" viewBox="0 0 22 22" fill="none" stroke="#a1a1a1" stroke-width="2" stroke-linecap="round"><circle cx="5" cy="5" r="3.2"/><circle cx="17.2" cy="16.8" r="3.2"/><path d="M5 8.3 V21.2 M5 9 C5 14 8 16.8 13.9 16.8"/></svg>
<div class="t" style="left:220.00px;top:1086.5px;font-size:19.5px;letter-spacing:0.431px;color:#ededed;font-family:'Liberation Mono',monospace;-webkit-text-stroke:0.32px #ededed;">main</div>
<div class="card" style="left:664px;top:882px"></div>
<div class="abs av" style="left:701px;top:919px"><svg width="48" height="48" viewBox="0 0 48 48"><path d="M18.5 1.5 H31 L32.5 17 C36 20 37.5 26 37 33 H10 C9.5 26 12 20 16.5 17 Z" fill="#06031b"/><path d="M15.9 33.3 C20 35.4 28 35.4 32.4 33.3 C31.5 39 28 43 24.6 46.6 C23.5 44.5 22.6 43 22.2 40.5 C21 39.2 19.5 39.3 17.6 40.6 C16.5 38 16 36 15.9 33.3 Z" fill="#f86a15"/></svg></div>
<div class="t" style="left:767.40px;top:913px;font-size:21px;letter-spacing:0.979px;color:#ededed;-webkit-text-stroke:0.6px #ededed;">codeology-v2</div>
<div class="t" style="left:767.40px;top:943px;font-size:21px;letter-spacing:0.297px;color:#a8a8a8;-webkit-text-stroke:0.32px #a8a8a8;">codeology-v2.vercel.app</div>
<div class="abs ring" style="left:1132px;top:919px"></div>
<svg class="abs" style="left:1144px;top:931px" width="25" height="24" viewBox="0 0 25 24" fill="none" stroke="#cdcdcd" stroke-width="2.2" stroke-linejoin="round"><path d="M0 12.2 H4.6 L8.3 3.3 L15.7 21.2 L20 12.2 H24.2"/></svg>
<svg class="abs" style="left:1201px;top:940px" width="24" height="6" viewBox="0 0 24 6" fill="#9a9a9a"><circle cx="3.7" cy="3" r="2.2"/><circle cx="11.9" cy="3" r="2.2"/><circle cx="20.1" cy="3" r="2.2"/></svg>
<div class="abs pill" style="left:701px;top:991px;width:309.4px"></div>
<svg class="abs" style="left:721.5px;top:1001.8px" width="24.5" height="24.5" viewBox="0 0 16 16" fill="#fff"><path d="M8 0C3.58 0 0 3.58 0 8c0 3.54 2.29 6.53 5.47 7.59.4.07.55-.17.55-.38 0-.19-.01-.82-.01-1.49-2.01.37-2.53-.49-2.69-.94-.09-.23-.48-.94-.82-1.13-.28-.15-.68-.52-.01-.53.63-.01 1.08.58 1.23.82.72 1.21 1.87.87 2.33.66.07-.52.28-.87.51-1.07-1.78-.2-3.64-.89-3.64-3.95 0-.87.31-1.59.82-2.15-.08-.2-.36-1.02.08-2.12 0 0 .67-.21 2.2.82.64-.18 1.32-.27 2-.27.68 0 1.36.09 2 .27 1.53-1.04 2.2-.82 2.2-.82.44 1.1.16 1.92.08 2.12.51.56.82 1.27.82 2.15 0 3.07-1.87 3.75-3.65 3.95.29.25.54.73.54 1.48 0 1.07-.01 1.93-.01 2.2 0 .21.15.46.55.38A8.013 8.013 0 0016 8c0-4.42-3.58-8-8-8z"/></svg>
<div class="t" style="left:755.30px;top:998.5px;font-size:19.5px;letter-spacing:0.877px;color:#ededed;-webkit-text-stroke:0.6px #ededed;">anav5704/Codeology-v2</div>
<div class="t" style="left:701.60px;top:1055.5px;font-size:21px;letter-spacing:0.785px;color:#a8a8a8;-webkit-text-stroke:0.32px #a8a8a8;">docs: fix getting started</div>
<div class="t" style="left:701.60px;top:1086px;font-size:21px;letter-spacing:0.575px;color:#a8a8a8;-webkit-text-stroke:0.32px #a8a8a8;">50d ago on</div>
<svg class="abs" style="left:819.8px;top:1089.3px" width="22" height="22" viewBox="0 0 22 22" fill="none" stroke="#a1a1a1" stroke-width="2" stroke-linecap="round"><circle cx="5" cy="5" r="3.2"/><circle cx="17.2" cy="16.8" r="3.2"/><path d="M5 8.3 V21.2 M5 9 C5 14 8 16.8 13.9 16.8"/></svg>
<div class="t" style="left:848.00px;top:1086.5px;font-size:19.5px;letter-spacing:0.431px;color:#ededed;font-family:'Liberation Mono',monospace;-webkit-text-stroke:0.32px #ededed;">main</div>
<div class="card" style="left:1292px;top:882px"></div>
<div class="abs av" style="left:1329px;top:919px"><svg width="48" height="48" viewBox="0 0 48 48"><defs><clipPath id="pkc"><circle cx="24" cy="23.7" r="22"/></clipPath></defs><g clip-path="url(#pkc)"><rect width="48" height="48" fill="#fff"/><path d="M0 0 H48 V24 C40 21 36 20 29 20 C20 20 10 22 0 25 Z" fill="#ee3f37"/><path d="M1 24.5 C10 21.5 20 19.3 29 19.3 C36 19.3 41 20.5 47 23.5 L47 27 C41 24 36 23 29 23 C20 23 10 25.5 1 28.5 Z" fill="#4b4e57"/><path d="M1 28.5 C4 29 6.5 28 9 27 C13 38 24 43 38 40 C34 46 26 48 20 47 C8 45 2 38 1 28.5 Z" fill="#a9a9a9"/><ellipse cx="12.4" cy="10.2" rx="5.9" ry="4.7" fill="#fff" transform="rotate(-28 12.4 10.2)"/><circle cx="28.9" cy="21.5" r="6.6" fill="#45474e"/><circle cx="28.9" cy="21.5" r="4.7" fill="#fff"/><circle cx="28.9" cy="21.5" r="3" fill="none" stroke="#cfd3d3" stroke-width=".8"/></g></svg>
</div>
<div class="t" style="left:1394.40px;top:913px;font-size:21px;letter-spacing:1.087px;color:#ededed;-webkit-text-stroke:0.6px #ededed;">poke-api</div>
<div class="t" style="left:1394.40px;top:943px;font-size:21px;letter-spacing:0.067px;color:#a8a8a8;-webkit-text-stroke:0.32px #a8a8a8;">pokemon.anav.dev</div>
<div class="abs ring" style="left:1760px;top:919px"></div>
<svg class="abs" style="left:1772px;top:931px" width="25" height="24" viewBox="0 0 25 24" fill="none" stroke="#cdcdcd" stroke-width="2.2" stroke-linejoin="round"><path d="M0 12.2 H4.6 L8.3 3.3 L15.7 21.2 L20 12.2 H24.2"/></svg>
<svg class="abs" style="left:1829px;top:940px" width="24" height="6" viewBox="0 0 24 6" fill="#9a9a9a"><circle cx="3.7" cy="3" r="2.2"/><circle cx="11.9" cy="3" r="2.2"/><circle cx="20.1" cy="3" r="2.2"/></svg>
<div class="abs pill" style="left:1329px;top:991px;width:257.0px"></div>
<svg class="abs" style="left:1349.5px;top:1001.8px" width="24.5" height="24.5" viewBox="0 0 16 16" fill="#fff"><path d="M8 0C3.58 0 0 3.58 0 8c0 3.54 2.29 6.53 5.47 7.59.4.07.55-.17.55-.38 0-.19-.01-.82-.01-1.49-2.01.37-2.53-.49-2.69-.94-.09-.23-.48-.94-.82-1.13-.28-.15-.68-.52-.01-.53.63-.01 1.08.58 1.23.82.72 1.21 1.87.87 2.33.66.07-.52.28-.87.51-1.07-1.78-.2-3.64-.89-3.64-3.95 0-.87.31-1.59.82-2.15-.08-.2-.36-1.02.08-2.12 0 0 .67-.21 2.2.82.64-.18 1.32-.27 2-.27.68 0 1.36.09 2 .27 1.53-1.04 2.2-.82 2.2-.82.44 1.1.16 1.92.08 2.12.51.56.82 1.27.82 2.15 0 3.07-1.87 3.75-3.65 3.95.29.25.54.73.54 1.48 0 1.07-.01 1.93-.01 2.2 0 .21.15.46.55.38A8.013 8.013 0 0016 8c0-4.42-3.58-8-8-8z"/></svg>
<div class="t" style="left:1383.10px;top:998.5px;font-size:19.5px;letter-spacing:0.691px;color:#ededed;-webkit-text-stroke:0.6px #ededed;">anav5704/PokeAPI</div>
<div class="t" style="left:1329.40px;top:1055.5px;font-size:21px;letter-spacing:0.807px;color:#a8a8a8;-webkit-text-stroke:0.32px #a8a8a8;">docs: fix ws</div>
<div class="t" style="left:1329.40px;top:1086px;font-size:21px;letter-spacing:0.542px;color:#a8a8a8;-webkit-text-stroke:0.32px #a8a8a8;">50d ago on</div>
<svg class="abs" style="left:1447.3px;top:1089.3px" width="22" height="22" viewBox="0 0 22 22" fill="none" stroke="#a1a1a1" stroke-width="2" stroke-linecap="round"><circle cx="5" cy="5" r="3.2"/><circle cx="17.2" cy="16.8" r="3.2"/><path d="M5 8.3 V21.2 M5 9 C5 14 8 16.8 13.9 16.8"/></svg>
<div class="t" style="left:1475.80px;top:1086.5px;font-size:19.5px;letter-spacing:0.431px;color:#ededed;font-family:'Liberation Mono',monospace;-webkit-text-stroke:0.32px #ededed;">main</div>
<div class="card" style="left:36px;top:1182px"></div>
<div class="card" style="left:664px;top:1182px"></div>
<div class="card" style="left:1292px;top:1182px"></div>
<svg class="abs" style="left:430px;top:370px" width="170" height="175" viewBox="430 370 170 175" fill="none" stroke="#fff" stroke-linecap="round" stroke-linejoin="round"><path d="M458.0 405.3 C463.1 405.6 480.3 406.0 488.3 407.2 C496.3 408.4 500.5 410.0 505.8 412.3 C511.1 414.6 516.5 417.6 520.4 421.0 C524.3 424.4 527.3 428.6 529.1 432.7 C530.9 436.8 531.3 441.2 531.3 445.8 C531.3 450.4 530.1 455.5 529.1 460.4 C528.1 465.3 526.7 469.9 525.5 475.0 C524.3 480.1 522.6 486.1 521.8 491.0 C520.9 495.9 519.9 500.0 520.4 504.1 C520.9 508.2 522.4 512.4 524.8 515.8 C527.2 519.2 530.6 522.4 535.0 524.5 C539.4 526.6 545.2 527.8 551.0 528.2 C556.8 528.6 566.4 527.1 569.5 526.9" stroke-width="12.6"/><path d="M448.8 405.7 L473.9 382.2 C476.5 380 479.8 379.8 481.6 382.2 C483 384 482.4 386.4 481 388.2 L471.5 400.4 L463 410.3 L488.6 436 C489.8 437.6 489.8 439.6 488.6 440.6 C487.4 441.6 485.6 441.4 484.4 440.2 L450 410.8 C447.6 408.6 447.4 407.2 448.8 405.7 Z" fill="#fff" stroke-width="2.4"/></svg>
</div>
</body>
</html>
